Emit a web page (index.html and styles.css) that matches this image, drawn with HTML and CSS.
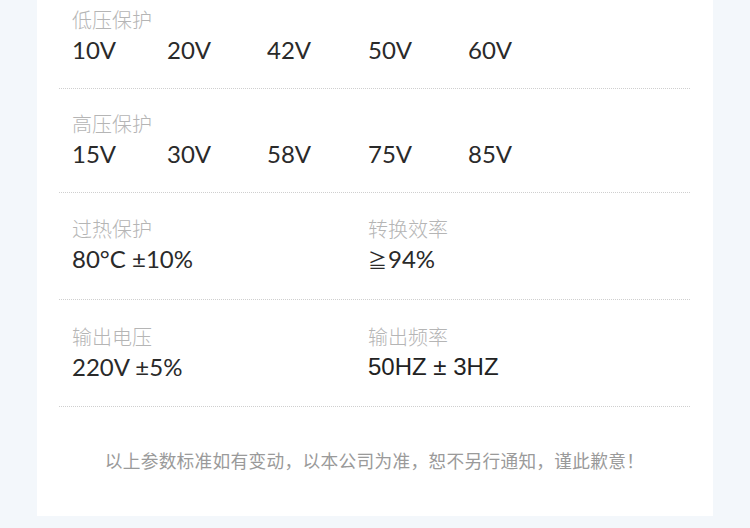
FILE: index.html
```html
<!DOCTYPE html>
<html lang="zh">
<head>
<meta charset="utf-8">
<link rel="stylesheet" href="styles.css">
</head>
<body>
<div class="page">
  <div class="card">
    <div class="row r1">
      <div class="label">低压保护</div>
      <div class="values five">
        <span>10V</span><span>20V</span><span>42V</span><span>50V</span><span>60V</span>
      </div>
    </div>
    <div class="row r2">
      <div class="label">高压保护</div>
      <div class="values five">
        <span>15V</span><span>30V</span><span>58V</span><span>75V</span><span>85V</span>
      </div>
    </div>
    <div class="row pair r3">
      <div class="cell">
        <div class="label">过热保护</div>
        <div class="values">80°C ±10%</div>
      </div>
      <div class="cell">
        <div class="label">转换效率</div>
        <div class="values"><span class="sym">≧</span>94%</div>
      </div>
    </div>
    <div class="row pair r4">
      <div class="cell">
        <div class="label">输出电压</div>
        <div class="values">220V ±5%</div>
      </div>
      <div class="cell">
        <div class="label">输出频率</div>
        <div class="values alt">50HZ ± 3HZ</div>
      </div>
    </div>
    <p class="note">以上参数标准如有变动，以本公司为准，恕不另行通知，谨此歉意！</p>
  </div>
</div>
</body>
</html>
```
FILE: styles.css
```css
html, body {
  margin: 0;
  padding: 0;
  background: #f3f7fb;
}
.page {
  padding: 0 37px 13px;
}
.card {
  background: #ffffff;
  padding: 0 23px 0 22px;
}
.row {
  border-bottom: 1px dotted #cfcfcf;
  padding: 21px 0 24px 13px;
}
.row.r1 {
  padding-top: 5px;
  padding-bottom: 23px;
}
.row.r2 {
  padding-top: 20px;
  padding-bottom: 23px;
}
.row.r3 {
  padding-top: 21px;
  padding-bottom: 24px;
}
.row.r4 {
  padding-top: 22px;
  padding-bottom: 24px;
}
.row.pair {
  display: grid;
  grid-template-columns: 296px 1fr;
}
.label {
  font-family: "Noto Sans CJK SC", "Noto Sans", sans-serif;
  font-weight: 300;
  font-size: 20px;
  line-height: 30px;
  color: #b5b5b5;
}
.values {
  font-family: Lato, "Noto Sans CJK SC", sans-serif;
  font-weight: 400;
  font-size: 24px;
  line-height: 30px;
  color: #2a2a2a;
}
.values.five {
  display: grid;
  grid-template-columns: 95px 100px 101px 100px auto;
}
.values .sym {
  font-family: "Noto Sans CJK SC", sans-serif;
  font-size: 19px;
  margin-right: 1px;
}
.values.alt {
  font-family: "Liberation Sans", Arial, sans-serif;
  color: #222222;
}
.note {
  margin: 0;
  padding: 41px 0 44px;
  text-align: center;
  font-family: "Noto Sans CJK SC", sans-serif;
  font-size: 17.7px;
  letter-spacing: 0.3px;
  line-height: 24px;
  color: #9a9a9a;
}
```
